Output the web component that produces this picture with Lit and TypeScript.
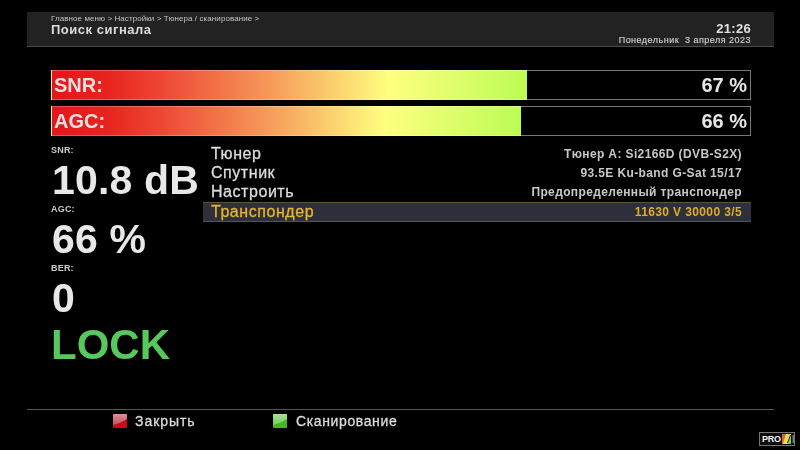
import { LitElement, html, css } from 'lit';
import { customElement } from 'lit/decorators.js';

const BARS = [
  { label: 'SNR:', value: '67 %', fill: 475 },
  { label: 'AGC:', value: '66 %', fill: 469 },
];

const STATS = [
  { label: 'SNR:', value: '10.8 dB' },
  { label: 'AGC:', value: '66 %' },
  { label: 'BER:', value: '0' },
];

const ROWS = [
  { name: 'Тюнер', value: 'Тюнер A: Si2166D (DVB-S2X)' },
  { name: 'Спутник', value: '93.5E Ku-band G-Sat 15/17' },
  { name: 'Настроить', value: 'Предопределенный транспондер' },
  { name: 'Транспондер', value: '11630 V 30000 3/5', active: true },
];

@customElement('app-root')
export class AppRoot extends LitElement {
  static styles = css`
    :host {
      display: block;
      position: relative;
      width: 800px;
      height: 450px;
      overflow: hidden;
      background: #000;
      color: #e6e6e6;
      font-family: 'Liberation Sans', Arial, sans-serif;
    }

    .screen {
      display: flex;
      flex-direction: column;
      height: 100%;
      box-sizing: border-box;
      padding: 12px 26px 0 27px;
      filter: blur(0.4px);
    }

    .header {
      display: flex;
      justify-content: space-between;
      height: 35px;
      box-sizing: border-box;
      padding: 3px 23px 0 24px;
      background: #222;
      border-bottom: 1px solid #4a4a4a;
    }

    .crumbs {
      font-size: 8px;
      line-height: 8px;
      color: #c4c4c4;
      letter-spacing: 0.08px;
    }

    .title {
      font-size: 13px;
      line-height: 13px;
      font-weight: bold;
      color: #dcdcdc;
      letter-spacing: 0.52px;
    }

    .clock {
      text-align: right;
      padding-top: 8px;
    }

    .time {
      font-size: 13px;
      line-height: 12px;
      color: #e0e0e0;
      font-weight: bold;
      letter-spacing: 0.3px;
    }

    .date {
      font-size: 9px;
      line-height: 10px;
      color: #d0d0d0;
      letter-spacing: 0.48px;
      -webkit-text-stroke: 0.15px #d0d0d0;
    }

    .body {
      padding: 23px 23px 0 24px;
      height: 362px;
      box-sizing: border-box;
    }

    .bars {
      display: flex;
      flex-direction: column;
      gap: 6px;
    }

    .bar {
      display: flex;
      height: 30px;
      box-sizing: border-box;
      border: 1px solid #777;
      position: relative;
    }

    .fill {
      margin: -1px 0 -1px -1px;
      border: 1px solid rgba(255, 255, 255, 0.25);
      border-right: none;
      box-sizing: content-box;
      background: linear-gradient(
        90deg,
        #e6141c 0%,
        #e8241e 12%,
        #ee4a36 24%,
        #f69a5a 46%,
        #ffff80 71%,
        #bcfc54 100%
      );
    }

    .bar-label,
    .bar-value {
      position: absolute;
      top: 0;
      font-size: 20px;
      line-height: 28px;
      font-weight: bold;
      color: #e8e0e0;
    }

    .bar-label {
      left: 2px;
    }

    .bar-value {
      right: 3px;
      color: #e6e6e6;
    }

    .panel {
      display: flex;
      margin-top: 8px;
    }

    .stats {
      width: 152px;
      flex: none;
      padding-top: 1px;
    }

    .stat-label {
      font-size: 9px;
      line-height: 11px;
      font-weight: bold;
      color: #ccc;
      letter-spacing: 0.2px;
    }

    .stat-value {
      font-size: 41px;
      line-height: 48px;
      font-weight: bold;
      color: #e8e8e8;
      white-space: nowrap;
      padding-left: 1px;
      letter-spacing: 0.15px;
    }

    .lock {
      font-size: 42px;
      line-height: 46px;
      font-weight: bold;
      color: #56c85c;
    }

    .rows {
      flex: 1;
      display: flex;
      flex-direction: column;
    }

    .row {
      display: flex;
      justify-content: space-between;
      align-items: center;
      height: 19.4px;
      padding: 0 9px 0 8px;
      font-size: 16px;
      color: #dcdcdc;
      letter-spacing: 0.55px;
      -webkit-text-stroke: 0.3px currentColor;
    }

    .row-value {
      font-size: 12px;
      font-weight: bold;
      color: #c8c8c8;
      letter-spacing: 0.38px;
      -webkit-text-stroke: 0;
    }

    .row.active {
      box-sizing: border-box;
      background: #2d303a;
      border-top: 1px solid #5c5434;
      border-bottom: 1px solid #55555a;
      color: #e8b42c;
    }

    .row.active .row-value {
      color: #e0ac28;
    }

    .footer {
      display: flex;
      align-items: flex-start;
      height: 26px;
      border-top: 1px solid #555;
      padding: 4px 0 0 86px;
      font-size: 14px;
      line-height: 14px;
      color: #dcdcdc;
      letter-spacing: 0.62px;
      -webkit-text-stroke: 0.3px #dcdcdc;
    }

    .key {
      width: 14px;
      height: 14px;
      margin-right: 8px;
      flex: none;
      border-radius: 1px;
    }

    .action {
      display: flex;
      align-items: flex-start;
      width: 160px;
    }

    .action:first-child {
      letter-spacing: 0.95px;
    }

    .action + .action .key {
      margin-right: 9px;
    }

    .logo {
      position: absolute;
      right: 5px;
      bottom: 4px;
      display: flex;
      align-items: center;
      gap: 1px;
      height: 14px;
      width: 36px;
      box-sizing: border-box;
      padding: 1px 0 1px 2px;
      border: 1px solid #777;
      background: #0c0c0c;
      color: #f4f4f4;
      font-size: 9px;
      font-weight: bold;
      letter-spacing: -0.2px;
      overflow: hidden;
    }

    .logo svg {
      flex: none;
    }
  `;

  private _key(id: string, top: string, mid: string, bottom: string) {
    return html`<svg class="key" viewBox="0 0 14 14">
      <defs>
        <linearGradient id=${id} x1="0" y1="0" x2="0" y2="1">
          <stop offset="0" stop-color=${top}></stop>
          <stop offset="1" stop-color=${mid}></stop>
        </linearGradient>
      </defs>
      <rect width="14" height="14" fill=${bottom}></rect>
      <path d="M0 0H14V5Q8 9 0 11Z" fill="url(#${id})"></path>
    </svg>`;
  }

  render(): unknown {
    return html`
      <div class="screen">
        <div class="header">
          <div>
            <div class="crumbs">Главное меню &gt; Настройки &gt; Тюнера / сканирование &gt;</div>
            <div class="title">Поиск сигнала</div>
          </div>
          <div class="clock">
            <div class="time">21:26</div>
            <div class="date">Понедельник&nbsp; 3 апреля 2023</div>
          </div>
        </div>

        <div class="body">
          <div class="bars">
            ${BARS.map(
              (b) => html`
                <div class="bar">
                  <div class="fill" style="width:${b.fill}px"></div>
                  <span class="bar-label">${b.label}</span>
                  <span class="bar-value">${b.value}</span>
                </div>
              `
            )}
          </div>

          <div class="panel">
            <div class="stats">
              ${STATS.map(
                (s) => html`
                  <div class="stat-label">${s.label}</div>
                  <div class="stat-value">${s.value}</div>
                `
              )}
              <div class="lock">LOCK</div>
            </div>
            <div class="rows">
              ${ROWS.map(
                (r) => html`
                  <div class="row ${r.active ? 'active' : ''}">
                    <span>${r.name}</span>
                    <span class="row-value">${r.value}</span>
                  </div>
                `
              )}
            </div>
          </div>
        </div>

        <div class="footer">
          <div class="action">
            ${this._key('keyRed', '#d8909c', '#c8505c', '#c80c18')}<span>Закрыть</span>
          </div>
          <div class="action">
            ${this._key('keyGreen', '#a8e090', '#78cc60', '#44b81c')}<span>Сканирование</span>
          </div>
        </div>
      </div>

      <div class="logo">
        <span>PRO</span>
        <svg width="14" height="10" viewBox="0 0 14 10">
          <rect width="9" height="10" fill="#8cc850"></rect>
          <path d="M0 0H4L1 10H0Z" fill="#d86a3a"></path>
          <path d="M4 0H9V2L5 10H1Z" fill="#f0dc50"></path>
          <path d="M5.5 9L8.5 1" stroke="#222" stroke-width="1"></path>
          <rect x="10.5" y="1" width="2" height="8" fill="#777"></rect>
        </svg>
      </div>
    `;
  }
}

declare global {
  interface HTMLElementTagNameMap {
    'app-root': AppRoot;
  }
}
